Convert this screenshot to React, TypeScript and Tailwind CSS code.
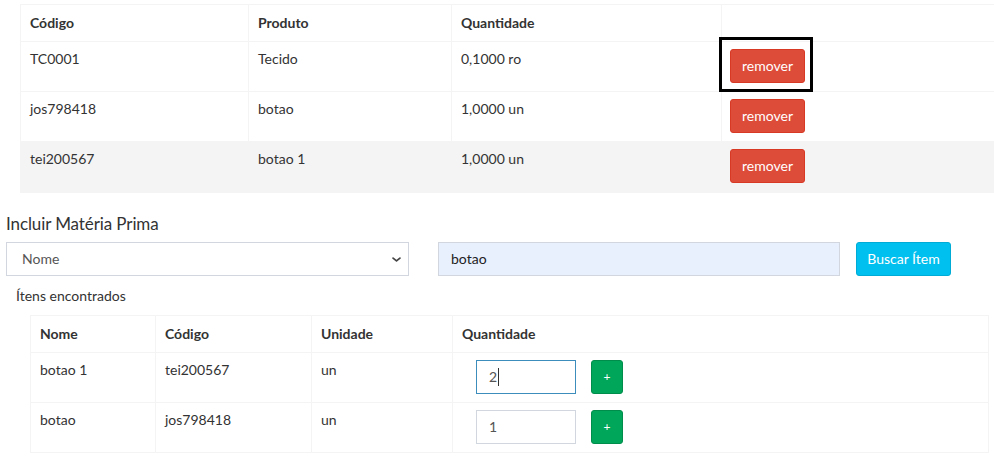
import React from 'react';

const font = { fontFamily: '"Source Sans Pro", Lato, "Helvetica Neue", Arial, sans-serif' };

const produtos = [
    { codigo: 'TC0001', produto: 'Tecido', qtd: '0,1000 ro' },
    { codigo: 'jos798418', produto: 'botao', qtd: '1,0000 un' },
    { codigo: 'tei200567', produto: 'botao 1', qtd: '1,0000 un' },
];

const encontrados = [
    { nome: 'botao 1', codigo: 'tei200567', unidade: 'un', qtd: '2', focused: true },
    { nome: 'botao', codigo: 'jos798418', unidade: 'un', qtd: '1', focused: false },
];

const App = () => {
    return (
        <div className="min-h-screen bg-white text-[14px] leading-[20px] text-[#333] overflow-hidden" style={font}>
            {/* Materia prima atual */}
            <div className="pt-[4px] pl-[20px]">
                <table className="table-fixed border-collapse w-[1000px]">
                    <colgroup>
                        <col className="w-[228px]" />
                        <col className="w-[203px]" />
                        <col className="w-[270px]" />
                        <col />
                    </colgroup>
                    <thead>
                        <tr className="h-[37px]">
                            <th className="border border-[#f4f4f4] px-[9px] text-left font-bold align-middle">Código</th>
                            <th className="border border-[#f4f4f4] px-[9px] text-left font-bold align-middle">Produto</th>
                            <th className="border border-[#f4f4f4] px-[9px] text-left font-bold align-middle">Quantidade</th>
                            <th className="border border-[#f4f4f4] px-[9px]"></th>
                        </tr>
                    </thead>
                    <tbody>
                        {produtos.map((p, idx) => (
                            <tr key={p.codigo} className={idx === 2 ? 'bg-[#f4f4f4] h-[51px]' : 'h-[50px]'}>
                                <td className="border border-[#f4f4f4] px-[9px] py-[7px] align-top">{p.codigo}</td>
                                <td className="border border-[#f4f4f4] px-[9px] py-[7px] align-top">{p.produto}</td>
                                <td className="border border-[#f4f4f4] px-[9px] py-[7px] align-top">{p.qtd}</td>
                                <td className="border border-[#f4f4f4] px-[8px] py-[7px] align-top">
                                    <div className="relative inline-block">
                                        <button className="h-[34px] w-[75px] rounded-[3px] border border-[#d73925] bg-[#dd4b39] text-white text-[14px]">
                                            remover
                                        </button>
                                        {idx === 0 && (
                                            <div className="absolute -left-[11px] -top-[12px] w-[94px] h-[55px] border-[3px] border-black pointer-events-none" />
                                        )}
                                    </div>
                                </td>
                            </tr>
                        ))}
                    </tbody>
                </table>
            </div>

            {/* Incluir */}
            <h3 className="mt-[20px] ml-[6px] text-[17px] leading-[22px] text-[#333] tracking-[-0.1px]">Incluir Matéria Prima</h3>
            <div className="mt-[7px] flex items-center">
                <div className="ml-[6px] w-[403px] h-[34px] border border-[#d2d6de] flex items-center justify-between pl-[15px] pr-[6px] text-[#555]">
                    <span>Nome</span>
                    <svg width="11" height="11" viewBox="0 0 16 16" fill="none" stroke="#444" strokeWidth="2.6" strokeLinecap="round" strokeLinejoin="round">
                        <path d="M3 6l5 4 5-4" />
                    </svg>
                </div>
                <div className="ml-[29px] w-[402px] h-[34px] border border-[#d2d6de] bg-[#e8f0fe] flex items-center pl-[12px] text-[#222]">
                    botao
                </div>
                <button className="ml-[16px] w-[95px] h-[34px] rounded-[3px] border border-[#00acd6] bg-[#00c0ef] text-white">
                    Buscar Ítem
                </button>
            </div>

            <p className="mt-[10px] ml-[16px]">Ítens encontrados</p>

            <div className="mt-[9px] pl-[30px]">
                <table className="table-fixed border-collapse w-[959px] border border-[#f4f4f4]">
                    <colgroup>
                        <col className="w-[125px]" />
                        <col className="w-[156px]" />
                        <col className="w-[141px]" />
                        <col />
                    </colgroup>
                    <thead>
                        <tr className="h-[37px]">
                            <th className="border border-[#f4f4f4] px-[9px] text-left font-bold">Nome</th>
                            <th className="border border-[#f4f4f4] px-[9px] text-left font-bold">Código</th>
                            <th className="border border-[#f4f4f4] px-[9px] text-left font-bold">Unidade</th>
                            <th className="border border-[#f4f4f4] px-[9px] text-left font-bold">Quantidade</th>
                        </tr>
                    </thead>
                    <tbody>
                        {encontrados.map((e) => (
                            <tr key={e.codigo} className="h-[50px]">
                                <td className="border border-[#f4f4f4] px-[9px] py-[7px] align-top">{e.nome}</td>
                                <td className="border border-[#f4f4f4] px-[9px] py-[7px] align-top">{e.codigo}</td>
                                <td className="border border-[#f4f4f4] px-[9px] py-[7px] align-top">{e.unidade}</td>
                                <td className="border border-[#f4f4f4] px-[8px] py-[7px] align-top">
                                    <div className="flex items-center pl-[15px]">
                                        <div
                                            className={
                                                e.focused
                                                    ? 'w-[100px] h-[34px] border border-[#3c8dbc] flex items-center pl-[12px] text-[#555]'
                                                    : 'w-[100px] h-[34px] border border-[#d2d6de] flex items-center pl-[12px] text-[#555]'
                                            }
                                        >
                                            {e.qtd}
                                            {e.focused && <span className="ml-px h-[18px] w-px bg-[#333]" />}
                                        </div>
                                        <button className="ml-[15px] w-[32px] h-[34px] rounded-[3px] border border-[#008d4c] bg-[#00a65a] text-white text-[12px]">
                                            +
                                        </button>
                                    </div>
                                </td>
                            </tr>
                        ))}
                    </tbody>
                </table>
            </div>
        </div>
    );
};

export default App;
